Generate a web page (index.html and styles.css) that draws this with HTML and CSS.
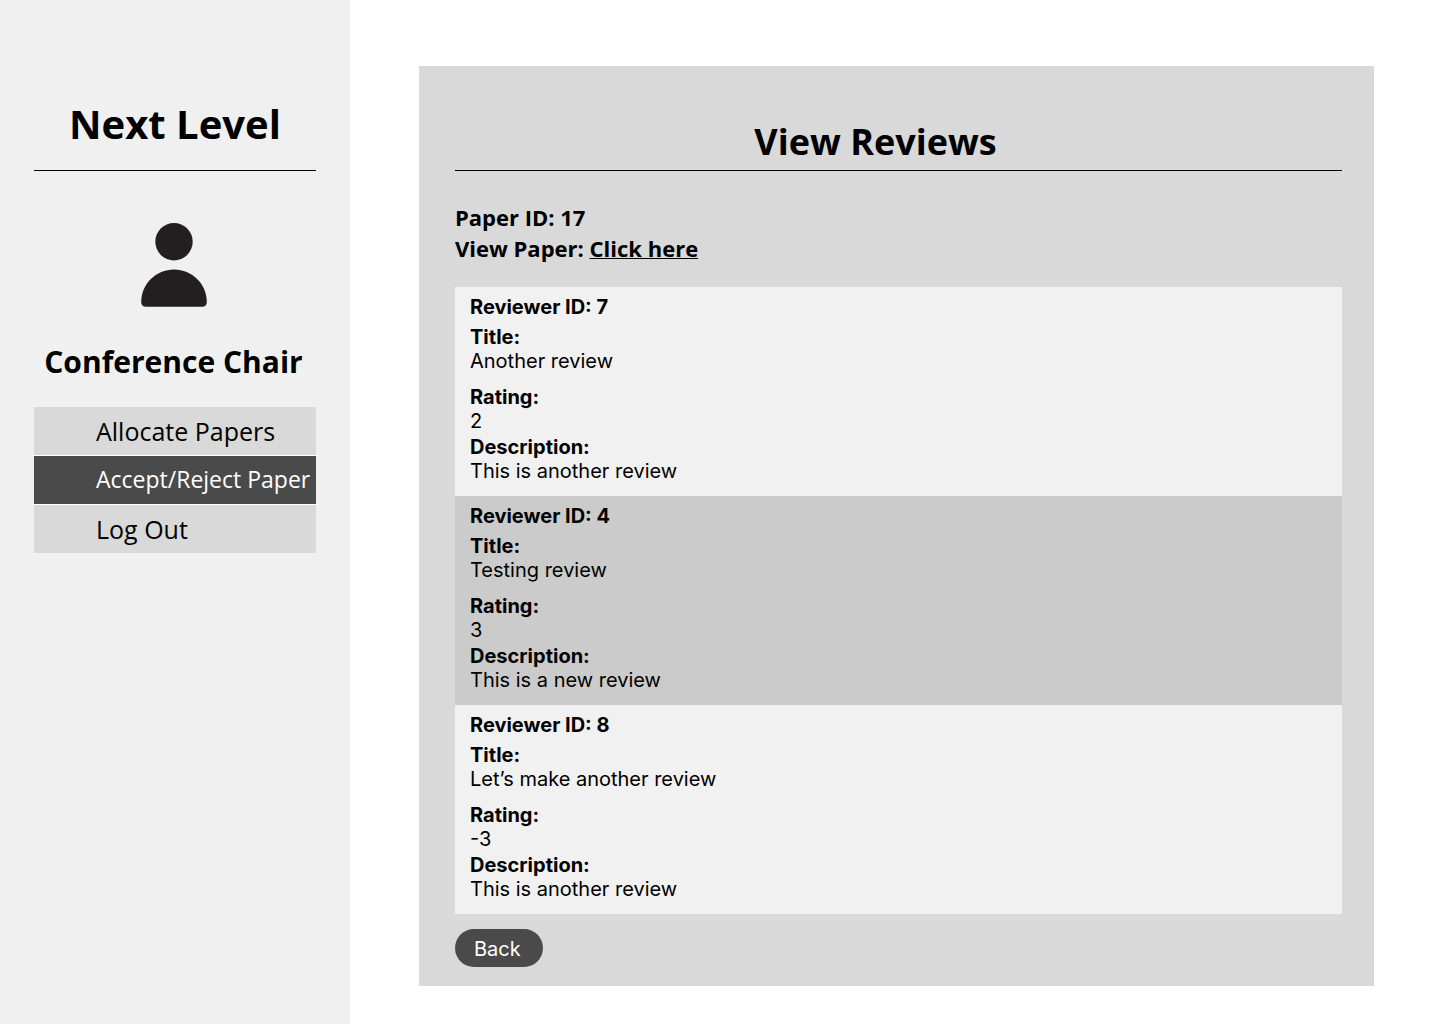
FILE: index.html
```html
<!DOCTYPE html>
<html lang="en">
<head>
<meta charset="utf-8">
<meta name="viewport" content="width=device-width, initial-scale=1">
<title>View Reviews - Next Level</title>
<link rel="stylesheet" href="styles.css">
</head>
<body>
<div class="layout">
  <aside class="sidebar">
    <h1 class="brand">Next Level</h1>
    <div class="profile">
      <svg class="avatar" viewBox="0 0 66 84" aria-hidden="true">
        <circle cx="33" cy="18.7" r="18.7"/>
        <path d="M0.2 79C0.2 61 15 46.5 33 46.5S65.800 61 65.800 79Q65.800 83.800 61 83.800H5Q0.200 83.800 0.200 79Z"/>
      </svg>
      <h2 class="role">Conference Chair</h2>
    </div>
    <nav class="menu">
      <a class="menu-item" href="#allocate">Allocate Papers</a>
      <a class="menu-item menu-item-active" href="#decide" aria-current="page">Accept/Reject Paper</a>
      <a class="menu-item" href="#logout">Log Out</a>
    </nav>
  </aside>
  <main class="content">
    <section class="panel">
      <h2 class="panel-title">View Reviews</h2>
      <div class="paper">
        <p>Paper ID: 17</p>
        <p>View Paper: <a class="paper-link" href="#paper">Click here</a></p>
      </div>
      <div class="reviews">
        <article class="review">
          <h3 class="reviewer">Reviewer ID: 7</h3>
          <dl class="fields">
            <dt>Title:</dt>
            <dd class="review-title">Another review</dd>
            <dt>Rating:</dt>
            <dd class="rating">2</dd>
            <dt>Description:</dt>
            <dd>This is another review</dd>
          </dl>
        </article>
        <article class="review">
          <h3 class="reviewer">Reviewer ID: 4</h3>
          <dl class="fields">
            <dt>Title:</dt>
            <dd class="review-title">Testing review</dd>
            <dt>Rating:</dt>
            <dd class="rating">3</dd>
            <dt>Description:</dt>
            <dd>This is a new review</dd>
          </dl>
        </article>
        <article class="review">
          <h3 class="reviewer">Reviewer ID: 8</h3>
          <dl class="fields">
            <dt>Title:</dt>
            <dd class="review-title">Let’s make another review</dd>
            <dt>Rating:</dt>
            <dd class="rating">-3</dd>
            <dt>Description:</dt>
            <dd>This is another review</dd>
          </dl>
        </article>
      </div>
      <button class="back" type="button">Back</button>
    </section>
  </main>
</div>
</body>
</html>
```
FILE: styles.css
```css
* {
  box-sizing: border-box;
  margin: 0;
  padding: 0;
}

body {
  background: #fff;
  color: #000;
  font-family: "Open Sans", sans-serif;
}

.layout {
  display: flex;
  min-height: 100vh;
}

.sidebar {
  display: flex;
  flex: 0 0 350px;
  flex-direction: column;
  align-items: center;
  padding: 96px 34px 32px;
  background: #f0f0f0;
}

.brand {
  width: 100%;
  padding-bottom: 18px;
  border-bottom: 1px solid #000;
  font-size: 40px;
  line-height: 56px;
  text-align: center;
}

.profile {
  display: flex;
  flex-direction: column;
  align-items: center;
  padding-right: 3px;
}

.avatar {
  width: 66px;
  height: 84px;
  margin: 52px 0 34px;
  fill: #231f20;
}

.role {
  font-size: 30px;
  line-height: 42px;
  white-space: nowrap;
}

.menu {
  display: flex;
  flex-direction: column;
  gap: 1px;
  width: 100%;
  margin-top: 24px;
  background: #fff;
}

.menu-item {
  padding-left: 62px;
  background: #d9d9d9;
  color: #000;
  font-size: 25px;
  line-height: 48px;
  text-decoration: none;
  white-space: nowrap;
}

.menu-item-active {
  padding-bottom: 2px;
  background: #4a4a4a;
  color: #fff;
  font-size: 23px;
  line-height: 46px;
}

.content {
  flex: 1;
  min-width: 0;
  padding: 66px 66px 38px 69px;
}

.panel {
  padding: 52px 32px 19px 36px;
  background: #d9d9d9;
}

.panel-title {
  padding: 0 46px 4px 0;
  border-bottom: 1px solid #000;
  font-size: 36px;
  line-height: 48px;
  text-align: center;
}

.paper {
  margin: 31px 0 23px;
  font-size: 22px;
  font-weight: 700;
  line-height: 31px;
}

.paper-link {
  color: inherit;
  text-decoration-thickness: 1px;
}

.reviews {
  font-family: Inter, sans-serif;
  font-size: 20px;
  line-height: 24px;
}

.review {
  padding: 8px 15px 13px;
  background: #f1f1f1;
}

.review:nth-child(even) {
  background: #cbcbcb;
}

.reviewer {
  margin-bottom: 6px;
  font-size: 20px;
  line-height: 24px;
}

.fields dt {
  font-weight: 700;
}

.review-title {
  margin-bottom: 12px;
}

.rating {
  margin-bottom: 2px;
}

.back {
  display: block;
  margin-top: 15px;
  padding: 2px 22px 0 19px;
  border: 0;
  border-radius: 19px;
  background: #4a4a4a;
  color: #fff;
  font-family: Inter, sans-serif;
  font-size: 20px;
  line-height: 36px;
  cursor: pointer;
}
```
